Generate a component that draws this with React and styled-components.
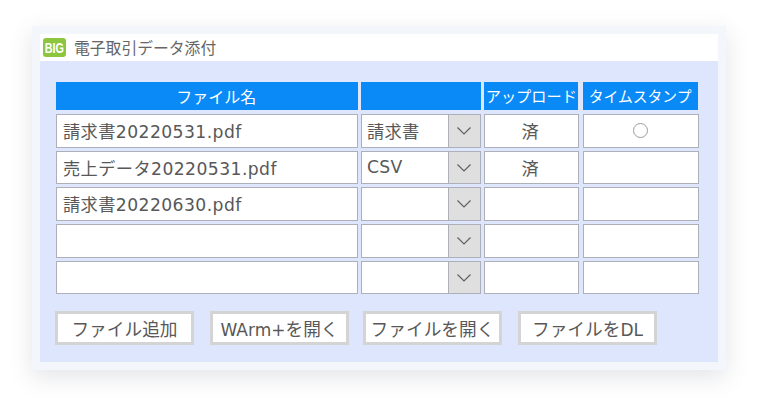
import React from "react";
import styled, { createGlobalStyle } from "styled-components";

const Global = createGlobalStyle`
  html, body { margin: 0; padding: 0; background: #fff; }
  body { width: 758px; height: 408px; overflow: hidden; font-family: "DejaVu Sans", "Noto Sans CJK JP", sans-serif; color: #555; }
  * { box-sizing: border-box; }
`;

const Page = styled.div`
  width: 758px;
  height: 408px;
  padding: 26px 32px 38px;
`;

const Frame = styled.div`
  width: 694px;
  height: 344px;
  padding: 8px;
  background: #f3f6fb;
  box-shadow: 0 7px 22px rgba(80, 88, 105, 0.16);
`;

const Window = styled.div`
  height: 100%;
  display: flex;
  flex-direction: column;
  background: #dde6fd;
`;

const TitleBar = styled.div`
  height: 27px;
  flex: none;
  background: #fff;
  display: flex;
  align-items: center;
  gap: 8px;
  padding-left: 3px;
`;

const Badge = styled.span`
  width: 23px;
  height: 19px;
  border-radius: 3px;
  background: #8cc63f;
  display: flex;
  align-items: center;
  justify-content: center;
  overflow: hidden;
`;

const BadgeText = styled.span`
  color: #fff;
  font: 700 15px/19px "Liberation Sans", sans-serif;
  transform: scaleX(0.72);
`;

const Title = styled.span`
  font: 15.8px/1 "Noto Sans CJK JP", sans-serif;
  color: #666;
`;

const Body = styled.div`
  padding: 21px 19px 0 16px;
`;

const Table = styled.div`
  display: grid;
  grid-template-columns: 301.7px 120px 95px 116px;
  grid-template-rows: 29px repeat(5, 33.7px);
  column-gap: 3.3px;
  row-gap: 3px;
`;

const HeadCell = styled.div`
  height: 28px;
  background: #0a8af7;
  color: #fff;
  margin-right: ${(p) => (p.$inset ? "1px" : "0")};
  padding-left: ${(p) => p.$shift || 0}px;
  display: flex;
  align-items: center;
  justify-content: center;
  font: ${(p) => p.$size}px/1 "Noto Sans CJK JP", sans-serif;
  white-space: nowrap;
  overflow: hidden;
`;

const Cell = styled.div`
  background: #fff;
  border: 1px solid #aeb0b8;
  padding: 0 ${(p) => p.$right || 0}px 1px ${(p) => (p.$center ? 0 : 6)}px;
  display: flex;
  align-items: center;
  justify-content: ${(p) => (p.$center ? "center" : "flex-start")};
  font-size: 17.2px;
  letter-spacing: 0.42px;
  color: #585858;
  white-space: nowrap;
`;

const Select = styled.div`
  background: #fff;
  border: 1px solid #aeb0b8;
  display: flex;
  align-items: stretch;
`;

const SelectValue = styled.div`
  flex: 1;
  padding: 0 0 1px 5px;
  display: flex;
  align-items: center;
  font-size: 17.2px;
  letter-spacing: 0.3px;
  color: #585858;
`;

const Arrow = styled.div`
  width: 32px;
  flex: none;
  background: #dfdfdf;
  border-left: 1px solid #aeb0b8;
  display: flex;
  align-items: center;
  justify-content: center;
`;

const Circle = styled.span`
  width: 15px;
  height: 15px;
  border-radius: 50%;
  border: 1px solid #9c9c9c;
`;

const Buttons = styled.div`
  display: flex;
  margin-top: 17px;
  margin-left: -1px;
`;

const Button = styled.button`
  width: 139px;
  height: 34px;
  margin-right: ${(p) => p.$gap || 0}px;
  padding: 0;
  background: #fff;
  border: 3px solid #d4d4d4;
  font-family: "DejaVu Sans", "Noto Sans CJK JP", sans-serif;
  font-size: 17.7px;
  color: #585858;
  white-space: nowrap;
`;

const Latin = styled.span`
  font-size: 17px;
`;

const Chevron = () => (
  <svg width="16" height="10" viewBox="0 0 16 10" fill="none">
    <path d="M1.5 1.5 L8 8 L14.5 1.5" stroke="#606060" strokeWidth="1.2" />
  </svg>
);

const rows = [
  ["請求書20220531.pdf", "請求書", "済", true],
  ["売上データ20220531.pdf", "CSV", "済", false],
  ["請求書20220630.pdf", "", "", false],
  ["", "", "", false],
  ["", "", "", false],
];

export default function App() {
  return (
    <Page>
      <Global />
      <Frame>
        <Window>
          <TitleBar>
            <Badge><BadgeText>BIG</BadgeText></Badge>
            <Title>電子取引データ添付</Title>
          </TitleBar>
          <Body>
            <Table>
              <HeadCell $size={16} $shift={19}>ファイル名</HeadCell>
              <HeadCell $size={16} />
              <HeadCell $size={15.2} $inset>アップロード</HeadCell>
              <HeadCell $size={14.8} $inset>タイムスタンプ</HeadCell>
              {rows.map(([name, kind, up, stamp], i) => (
                <React.Fragment key={i}>
                  <Cell>{name}</Cell>
                  <Select>
                    <SelectValue>{kind}</SelectValue>
                    <Arrow><Chevron /></Arrow>
                  </Select>
                  <Cell $center $right={3}>{up}</Cell>
                  <Cell $center>{stamp && <Circle />}</Cell>
                </React.Fragment>
              ))}
            </Table>
            <Buttons>
              <Button $gap={16}>ファイル追加</Button>
              <Button $gap={14}><Latin>WArm+</Latin>を開く</Button>
              <Button $gap={16}>ファイルを開く</Button>
              <Button>ファイルを<Latin>DL</Latin></Button>
            </Buttons>
          </Body>
        </Window>
      </Frame>
    </Page>
  );
}
